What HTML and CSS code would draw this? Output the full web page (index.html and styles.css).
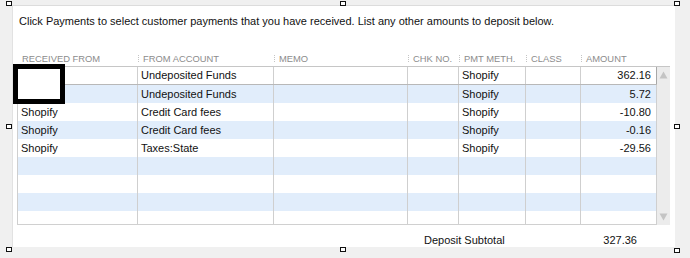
FILE: index.html
```html
<!DOCTYPE html>
<html>
<head>
<meta charset="utf-8">
<link rel="stylesheet" href="styles.css">
</head>
<body>
<div class="canvas">
  <div class="panel">
    <p class="intro">Click Payments to select customer payments that you have received. List any other amounts to deposit below.</p>
    <div class="grid-wrap">
      <div class="head">
        <div class="hc first">RECEIVED FROM</div>
        <div class="hc">FROM ACCOUNT</div>
        <div class="hc">MEMO</div>
        <div class="hc">CHK NO.</div>
        <div class="hc">PMT METH.</div>
        <div class="hc">CLASS</div>
        <div class="hc">AMOUNT</div>
      </div>
      <div class="body">
        <div class="rows">
          <div class="row sel"><div class="c"></div><div class="c">Undeposited Funds</div><div class="c"></div><div class="c"></div><div class="c">Shopify</div><div class="c"></div><div class="c num">362.16</div></div>
          <div class="row alt"><div class="c"></div><div class="c">Undeposited Funds</div><div class="c"></div><div class="c"></div><div class="c">Shopify</div><div class="c"></div><div class="c num">5.72</div></div>
          <div class="row"><div class="c">Shopify</div><div class="c">Credit Card fees</div><div class="c"></div><div class="c"></div><div class="c">Shopify</div><div class="c"></div><div class="c num">-10.80</div></div>
          <div class="row alt"><div class="c">Shopify</div><div class="c">Credit Card fees</div><div class="c"></div><div class="c"></div><div class="c">Shopify</div><div class="c"></div><div class="c num">-0.16</div></div>
          <div class="row"><div class="c">Shopify</div><div class="c">Taxes:State</div><div class="c"></div><div class="c"></div><div class="c">Shopify</div><div class="c"></div><div class="c num">-29.56</div></div>
          <div class="row alt"><div class="c"></div><div class="c"></div><div class="c"></div><div class="c"></div><div class="c"></div><div class="c"></div><div class="c"></div></div>
          <div class="row"><div class="c"></div><div class="c"></div><div class="c"></div><div class="c"></div><div class="c"></div><div class="c"></div><div class="c"></div></div>
          <div class="row alt"><div class="c"></div><div class="c"></div><div class="c"></div><div class="c"></div><div class="c"></div><div class="c"></div><div class="c"></div></div>
          <div class="row"><div class="c"></div><div class="c"></div><div class="c"></div><div class="c"></div><div class="c"></div><div class="c"></div><div class="c"></div></div>
        </div>
        <div class="scroll">
          <svg class="arrow" width="9" height="8" viewBox="0 0 9 8"><polygon points="4.5,0.5 8.5,7.5 0.5,7.5" fill="#c4c4c4"/></svg>
          <svg class="arrow" width="9" height="8" viewBox="0 0 9 8"><polygon points="0.5,0.5 8.5,0.5 4.5,7.5" fill="#c4c4c4"/></svg>
        </div>
        <div class="redact"></div>
      </div>
      <div class="subtotal">
        <span class="sub-label">Deposit Subtotal</span>
        <span class="sub-amt">327.36</span>
      </div>
    </div>
  </div>
  <span class="handle h-tl"></span>
  <span class="handle h-tm"></span>
  <span class="handle h-tr"></span>
  <span class="handle h-ml"></span>
  <span class="handle h-mr"></span>
  <span class="handle h-bl"></span>
  <span class="handle h-bm"></span>
  <span class="handle h-br"></span>
</div>
</body>
</html>
```
FILE: styles.css
```css
* { box-sizing: border-box; }
html, body { margin: 0; padding: 0; }
body {
  background: #f0f0f0;
  font-family: "Liberation Sans", Arial, sans-serif;
  font-size: 11px;
  color: #111;
}
.canvas {
  position: relative;
  width: 690px;
  height: 258px;
  overflow: hidden;
}
.panel {
  margin: 5px 0 0 12px;
  width: 663px;
  height: 242px;
  background: #fff;
  border-top: 1px solid #dcdcdc;
  border-left: 1px solid #e2e2e2;
}
.intro {
  margin: 0;
  padding: 8px 0 0 6px;
  line-height: 14px;
  height: 45px;
}
.grid-wrap {
  margin-left: 4px;
  width: 653px;
}
.head {
  display: grid;
  grid-template-columns: 121px 136px 134px 51px 67px 55px 76px;
  height: 15px;
  line-height: 15px;
  font-size: 9.4px;
  color: #8c8c8c;
}
.hc {
  padding-left: 5px;
  position: relative;
  white-space: nowrap;
}
.hc::before {
  content: "";
  position: absolute;
  left: 0;
  top: 4px;
  width: 1px;
  height: 8px;
  background: repeating-linear-gradient(#c4c4c4 0 1px, transparent 1px 2px);
}
.hc.first::before { display: none; }
.body {
  position: relative;
  display: flex;
  border-top: 1px solid #c6c6c6;
  height: 159px;
}
.rows {
  width: 640px;
  height: 158px;
  overflow: hidden;
  border-left: 1px solid #cfcfcf;
  border-bottom: 1px solid #d0d0d0;
}
.row {
  display: grid;
  grid-template-columns: 120px 136px 134px 51px 67px 55px 76px;
  height: 18px;
  line-height: 18px;
}
.row.alt { background: #e1edfb; }
.row.sel {
  border-bottom: 1px solid #b8b8b8;
  height: 18px;
  line-height: 17px;
}
.c {
  border-right: 1px solid #cfcfcf;
  padding-left: 3px;
  white-space: nowrap;
  overflow: hidden;
}
.row.sel .c:last-child { border-right: 1px solid #a8a8a8; }
.c.num {
  text-align: right;
  padding-right: 5px;
}
.scroll {
  width: 13px;
  height: 158px;
  background: #ececec;
  display: flex;
  flex-direction: column;
  justify-content: space-between;
  align-items: center;
  padding: 4px 0 4px;
}
.arrow { display: block; }
.redact {
  position: absolute;
  left: -4px;
  top: -3px;
  width: 52px;
  height: 40px;
  border: 5px solid #000;
  background: #fff;
}
.subtotal {
  display: flex;
  width: 620px;
  padding: 8px 0 0 407px;
  line-height: 14px;
}
.sub-amt { margin-left: auto; }
.handle {
  position: absolute;
  width: 6px;
  height: 5px;
  border: 1px solid #111;
  background: #fff;
}
.h-tl { left: 6px; top: 1px; }
.h-tm { left: 340px; top: 1px; }
.h-tr { left: 674px; top: 1px; }
.h-ml { left: 6px; top: 124px; }
.h-mr { left: 674px; top: 124px; }
.h-bl { left: 6px; top: 247px; }
.h-bm { left: 340px; top: 247px; }
.h-br { left: 674px; top: 248px; }
```
